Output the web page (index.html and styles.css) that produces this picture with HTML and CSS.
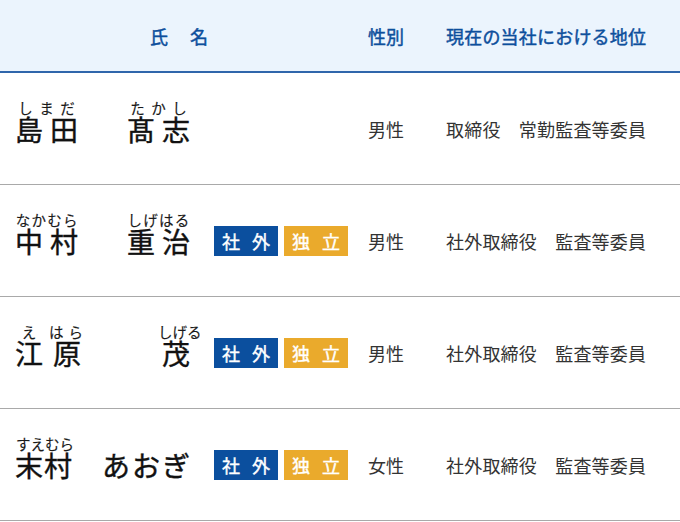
FILE: index.html
```html
<!DOCTYPE html>
<html lang="ja">
<head>
<meta charset="utf-8">
<title>役員一覧</title>
<link rel="stylesheet" href="styles.css">
</head>
<body>
<div class="table">
  <div class="row head">
    <div class="c-name"><span class="h-name"><span>氏</span><span>名</span></span></div>
    <div class="c-gender">性別</div>
    <div class="c-pos">現在の当社における地位</div>
  </div>

  <div class="row">
    <div class="c-name">
      <div class="name">
        <span class="rb"><span class="rt"><span>し</span><span>ま</span><span>だ</span></span><span class="base">島田</span></span>
        <span class="rb"><span class="rt"><span>た</span><span>か</span><span>し</span></span><span class="base">髙志</span></span>
      </div>
    </div>
    <div class="c-gender">男性</div>
    <div class="c-pos">取締役　常勤監査等委員</div>
  </div>

  <div class="row">
    <div class="c-name">
      <div class="name">
        <span class="rb"><span class="rt"><span>な</span><span>か</span><span>む</span><span>ら</span></span><span class="base">中村</span></span>
        <span class="rb"><span class="rt"><span>し</span><span>げ</span><span>は</span><span>る</span></span><span class="base">重治</span></span>
      </div>
      <div class="badges">
        <span class="badge blue"><span>社</span><span>外</span></span>
        <span class="badge yellow"><span>独</span><span>立</span></span>
      </div>
    </div>
    <div class="c-gender">男性</div>
    <div class="c-pos">社外取締役　監査等委員</div>
  </div>

  <div class="row">
    <div class="c-name">
      <div class="name">
        <span class="sur">
          <span class="rb"><span class="rt"><span>え</span></span><span class="base">江</span></span>
          <span class="rb gap"><span class="rt spread"><span>は</span><span>ら</span></span><span class="base">原</span></span>
        </span>
        <span class="rb"><span class="rt wide"><span>し</span><span>げ</span><span>る</span></span><span class="base">茂</span></span>
      </div>
      <div class="badges">
        <span class="badge blue"><span>社</span><span>外</span></span>
        <span class="badge yellow"><span>独</span><span>立</span></span>
      </div>
    </div>
    <div class="c-gender">男性</div>
    <div class="c-pos">社外取締役　監査等委員</div>
  </div>

  <div class="row">
    <div class="c-name">
      <div class="name">
        <span class="rb"><span class="rt tight"><span>す</span><span>え</span><span>む</span><span>ら</span></span><span class="base narrow">末村</span></span>
        <span class="rb"><span class="base kana">あおぎ</span></span>
      </div>
      <div class="badges">
        <span class="badge blue"><span>社</span><span>外</span></span>
        <span class="badge yellow"><span>独</span><span>立</span></span>
      </div>
    </div>
    <div class="c-gender">女性</div>
    <div class="c-pos">社外取締役　監査等委員</div>
  </div>
</div>
</body>
</html>
```

FILE: styles.css
```css
* { box-sizing: border-box; }

body {
  margin: 0;
  background: #ffffff;
  font-family: "Noto Sans CJK JP", "Noto Sans", sans-serif;
  color: #333333;
}

.table {
  width: 680px;
}

.row {
  display: grid;
  grid-template-columns: 358px 78px 1fr;
  align-items: center;
  height: 112px;
  border-bottom: 1px solid #a9a9a9;
  font-size: 18px;
  line-height: 1;
}

.row.head {
  height: 73px;
  background: #ebf4fd;
  border-bottom: 2px solid #2f66ab;
  color: #0d4f9c;
  -webkit-text-stroke: 0.45px #0d4f9c;
}

.row .c-name {
  display: flex;
  align-items: center;
  padding-left: 15px;
}

.row.head .c-name {
  justify-content: center;
  padding-left: 0;
}

.h-name {
  display: flex;
  gap: 22px;
}

.c-gender,
.c-pos {
  padding-left: 10px;
  white-space: nowrap;
}

.c-pos {
  letter-spacing: 0.2px;
}

.name {
  width: 175px;
  display: flex;
  justify-content: space-between;
  font-size: 28px;
  color: #111111;
}

.rb {
  position: relative;
  display: inline-block;
  line-height: 1;
}

.base {
  display: block;
  letter-spacing: 7px;
  margin-right: -7px;
  -webkit-text-stroke: 0.4px #111111;
}

.base.narrow {
  letter-spacing: 1px;
  margin-right: -1px;
}

.base.kana {
  letter-spacing: 2px;
  margin-right: -2px;
}

.rt {
  position: absolute;
  left: 0;
  right: 0;
  bottom: 100%;
  margin-bottom: -1px;
  display: flex;
  justify-content: space-around;
  font-size: 14.5px;
  letter-spacing: 0;
  color: #1a1a1a;
  -webkit-text-stroke: 0.15px #1a1a1a;
}

.rt.wide {
  left: -4px;
  right: -1px;
}

.rt.spread {
  left: -4px;
  right: -2px;
  justify-content: space-between;
}

.rt.tight {
  justify-content: space-between;
  padding: 0 1px;
}

.sur {
  display: flex;
}

.rb.gap {
  margin-left: 10px;
}

.badges {
  display: flex;
  gap: 6px;
  margin-left: 24px;
}

.badge {
  width: 64px;
  height: 30px;
  display: flex;
  align-items: center;
  justify-content: center;
  gap: 12px;
  font-size: 18px;
  color: #ffffff;
  -webkit-text-stroke: 0.4px #ffffff;
  white-space: nowrap;
}

.badge.blue {
  background: #0b4f9e;
}

.badge.yellow {
  background: #eaaa2c;
}
```
